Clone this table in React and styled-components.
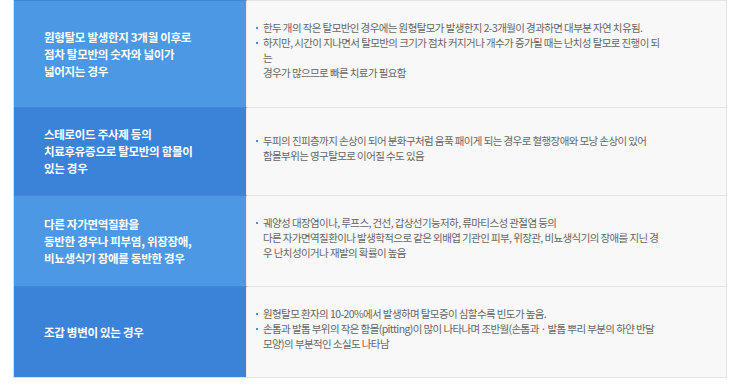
import styled, { createGlobalStyle } from "styled-components";

const Global = createGlobalStyle`
    html, body { margin:0; padding:0; background:#fff; }
    body { font-family: "Noto Sans CJK KR", "Noto Sans", sans-serif; }
`;

const rows = [
    {
        tone:'light', h:107,
        title:['원형탈모 발생한지 3개월 이후로','점차 탈모반의 숫자와 넓이가','넓어지는 경우'],
        items:[
            ['한두 개의 작은 탈모반인 경우에는 원형탈모가 발생한지 2-3개월이 경과하면 대부분 자연 치유됨.'],
            ['하지만, 시간이 지나면서 탈모반의 크기가 점차 커지거나 개수가 증가될 때는 난치성 탈모로 진행이 되','는','경우가 많으므로 빠른 치료가 필요함'],
        ]
    },
    {
        tone:'dark', h:88,
        title:['스테로이드 주사제 등의','치료후유증으로 탈모반의 함몰이','있는 경우'],
        items:[
            ['두피의 진피층까지 손상이 되어 분화구처럼 움푹 패이게 되는 경우로 혈행장애와 모낭 손상이 있어','함몰부위는 영구탈모로 이어질 수도 있음'],
        ]
    },
    {
        tone:'light', h:91,
        title:['다른 자가면역질환을','동반한 경우나 피부염, 위장장애,','비뇨생식기 장애를 동반한 경우'],
        items:[
            ['궤양성 대장염이나, 루프스, 건선, 갑상선기능저하, 류마티스성 관절염 등의','다른 자가면역질환이나 발생학적으로 같은 외배엽 기관인 피부, 위장관, 비뇨생식기의 장애를 지닌 경','우 난치성이거나 재발의 확률이 높음'],
        ]
    },
    {
        tone:'dark', h:91,
        title:['조갑 병변이 있는 경우'],
        items:[
            ['원형탈모 환자의 10-20%에서 발생하며 탈모증이 심할수록 빈도가 높음.'],
            ['손톱과 발톱 부위의 작은 함몰(pitting)이 많이 나타나며 조반월(손톱과 · 발톱 뿌리 부분의 하얀 반달','모양)의 부분적인 소실도 나타남'],
        ]
    },
];

const withBreaks = (lines) => lines.map((l,i)=>(
    <span key={i}>{l}{i < lines.length-1 && <br/>}</span>
))

const App = () => {
    return(
        <>
            <Global/>
            <Table>
                {rows.map((r,i)=>(
                    <Row key={i} $h={r.h}>
                        <Title $tone={r.tone}>
                            <p>{withBreaks(r.title)}</p>
                        </Title>
                        <Desc>
                            <ul>
                                {r.items.map((it,j)=>(
                                    <li key={j}>{withBreaks(it)}</li>
                                ))}
                            </ul>
                        </Desc>
                    </Row>
                ))}
            </Table>
        </>
    )
}
export default App

const Table = styled.div`
    margin-left:13px;
    width:714px;
    border-left:1px solid #dcdcdc;
    border-right:1px solid #e2e2e2;
    border-bottom:1px solid #e2e2e2;
    box-sizing:border-box;
`;

const Row = styled.div`
    display:grid;
    grid-template-columns: 233px 1fr;
    height:${p=>p.$h}px;
`;

const Title = styled.div`
    display:flex;
    align-items:center;
    box-sizing:border-box;
    padding:0 20px 0 30px;
    background-color:${p=>p.$tone==='light' ? '#4c98e4' : '#3b83d9'};
    border-top:1px solid #3f86d6;
    border-right:1px solid #e6eef8;
    p{
        margin:0;
        color:#fff;
        font-size:11.5px;
        font-weight:700;
        line-height:17px;
        letter-spacing:-0.3px;
        white-space:nowrap;
    }
`;

const Desc = styled.div`
    display:flex;
    align-items:center;
    box-sizing:border-box;
    padding:0 10px 8px 8px;
    background-color:#f8f8f8;
    border-top:1px solid #e3e3e3;
    ul{
        margin:0;
        padding:0;
        list-style:none;
    }
    li{
        position:relative;
        padding-left:8px;
        color:#666;
        font-size:10.5px;
        line-height:15px;
        letter-spacing:-0.6px;
        white-space:nowrap;
    }
    li::before{
        content:'';
        position:absolute;
        left:1px;
        top:7px;
        width:2px;
        height:2px;
        background:#4a90e2;
    }
`;
